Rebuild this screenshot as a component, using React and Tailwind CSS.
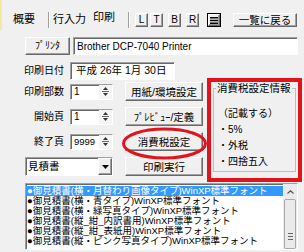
import React from "react";

const FONT = "font-['Liberation_Sans','Noto_Sans_CJK_JP',sans-serif]";

// Windows classic bevels
const raised =
  "bg-[#f0f0f0] border border-t-white border-l-white border-r-[#696969] border-b-[#696969] shadow-[inset_-1px_-1px_0_#a0a0a0]";
const sunken =
  "bg-white border border-t-[#a0a0a0] border-l-[#a0a0a0] border-r-white border-b-white shadow-[inset_1px_1px_0_#696969]";

const Btn = ({ className = "", children }) => (
  <div
    className={`${raised} flex items-center justify-center text-[10.5px] leading-[12px] text-black whitespace-nowrap ${className}`}
  >
    {children}
  </div>
);

const Sep = () => (
  <div className="w-[2px] h-[16px] border-l border-l-[#a0a0a0] border-r border-r-white" />
);

const Spin = () => (
  <div className="w-[13px] h-full flex flex-col items-center justify-center gap-[1px] bg-[#f4f4f4]">
    <svg width="5" height="3" viewBox="0 0 5 3">
      <path d="M2.5 0 L5 3 H0Z" fill="#333" />
    </svg>
    <div className="w-[7px] h-px bg-[#666]" />
    <svg width="5" height="3" viewBox="0 0 5 3">
      <path d="M0 0 H5 L2.5 3Z" fill="#333" />
    </svg>
  </div>
);

const FieldRow = ({ label, value, btn, small }) => (
  <div className="h-[25px] flex items-center">
    <div className="w-[64px] text-right text-[10px] leading-[12px]">{label}</div>
    <div className={`${sunken} ml-[6px] w-[43px] h-[16px] flex`}>
      <div className={`flex-1 pl-[3px] leading-[14px] ${small ? "text-[9.5px]" : "text-[10px]"}`}>
        {value}
      </div>
      <Spin />
    </div>
    <Btn className="ml-[12px] w-[78px] h-[19px]">{btn}</Btn>
  </div>
);

const rows = [
  "●御見積書(横・月替わり画像タイプ)WinXP標準フォント",
  "●御見積書(横・青タイプ)WinXP標準フォント",
  "●御見積書(横・緑写真タイプ)WinXP標準フォント",
  "●御見積書(縦_紺_内訳書用)WinXP標準フォント",
  "●御見積書(縦_紺_表紙用)WinXP標準フォント",
  "●御見積書(縦・ピンク写真タイプ)WinXP標準フォント",
];

export default function App() {
  return (
    <div
      className={`relative w-[304px] h-[252px] overflow-hidden bg-[#f0f0f0] text-black flex flex-col ${FONT}`}
    >
      {/* tabs + toolbar */}
      <div className="h-[30px] flex shrink-0">
        <div className="w-[2px] bg-[#f1eba2]" />
        <div className="flex items-start pt-[12px] pl-[10px] text-[11px] leading-[12px]">
          <div className="w-[36px] pl-[1px] pt-[1px]">概要</div>
          <Sep />
          <div className="w-[40px] pl-[3px] pt-[1px]">行入力</div>
          <div className="w-[38px] pl-[3px] -mt-[1px]">印刷</div>
          <Sep />
          <Btn className="ml-[5px] mt-[1px] w-[13px] h-[14px] text-[10px]">L</Btn>
          <Btn className="ml-[2px] mt-[1px] w-[13px] h-[14px] text-[10px]">T</Btn>
          <Btn className="ml-[5px] mt-[1px] w-[13px] h-[14px] text-[10px]">B</Btn>
          <Btn className="ml-[5px] mt-[1px] w-[13px] h-[14px] text-[10px]">R</Btn>
          <div className="ml-[8px] mt-[1px] w-[14px] h-[14px] border border-black">
            <div className={`${raised} w-full h-full flex items-center justify-center`}>
              <svg width="8" height="7" viewBox="0 0 8 7">
                <rect x="0" y="0" width="8" height="1.5" fill="#000" />
                <rect x="0" y="2.75" width="8" height="1.5" fill="#000" />
                <rect x="0" y="5.5" width="8" height="1.5" fill="#000" />
              </svg>
            </div>
          </div>
          <Btn className="ml-[12px] mt-[1px] w-[64px] h-[14px]">一覧に戻る</Btn>
        </div>
      </div>

      {/* printer */}
      <div className="mt-[7px] h-[18px] flex pl-[25px] pr-[6px] shrink-0">
        <Btn className="w-[45px] h-full text-[10px]">ﾌﾟﾘﾝﾀ</Btn>
        <div className={`${sunken} ml-[3px] flex-1 flex items-center pl-[3px] text-[10px]`}>
          Brother DCP-7040 Printer
        </div>
      </div>

      {/* settings */}
      <div className="mt-[7px] h-[120px] flex shrink-0">
        <div className="w-[203px] flex flex-col">
          <div className="h-[18px] flex items-center">
            <div className="w-[64px] text-right text-[10px] leading-[12px]">印刷日付</div>
            <div className={`${sunken} ml-[6px] w-[105px] h-full flex items-center pl-[5px] text-[10.5px]`}>
              平成 26年 1月 30日
            </div>
          </div>
          <div className="-mt-[1px] flex flex-col">
            <FieldRow label="印刷部数" value="1" btn="用紙/環境設定" />
            <FieldRow label="開始頁" value="1" btn="ﾌﾟﾚﾋﾞｭｰ/定義" />
            <FieldRow label="終了頁" value="9999" btn="消費税設定" small />
            <div className="h-[25px] flex items-center">
              <div className={`${sunken} ml-[25px] w-[88px] h-[19px] flex`}>
                <div className="flex-1 pl-[2px] text-[10.5px] leading-[16px]">見積書</div>
                <div className={`${raised} w-[14px] flex items-center justify-center`}>
                  <svg width="7" height="4" viewBox="0 0 7 4">
                    <path d="M0 0 H7 L3.5 4Z" fill="#000" />
                  </svg>
                </div>
              </div>
              <Btn className="ml-[12px] w-[78px] h-[19px]">印刷実行</Btn>
            </div>
          </div>
        </div>

        {/* tax info, boxed in red */}
        <div className="ml-[4px] mt-[16px] w-[95px] h-[104px] border-4 border-[#e2141b] px-[2px]">
          <fieldset className="border border-[#bdbdbd] h-[90px] min-w-0">
            <legend className="ml-[2px] px-[1px] text-[10.5px] leading-[12px] whitespace-nowrap">
              消費税設定情報
            </legend>
            <div className="mt-[12px] pl-[4px] text-[10px] leading-[16px] whitespace-nowrap">
              <div>（記載する）</div>
              <div>・5%</div>
              <div>・外税</div>
              <div>・四捨五入</div>
            </div>
          </fieldset>
        </div>
      </div>

      {/* form list */}
      <div className={`${sunken} mt-[1px] ml-[25px] w-[273px] flex-1 mb-[2px] flex overflow-hidden`}>
        <div className="flex-1 pt-[2px] pl-[1px] text-[9.5px] leading-[10px] whitespace-nowrap overflow-hidden">
          {rows.map((r, i) => (
            <div key={i} className={i === 0 ? "bg-[#3399ff] text-white -ml-[1px] pl-[1px]" : ""}>
              {r}
            </div>
          ))}
        </div>
        <div className="w-[14px] flex flex-col bg-[#ebebeb]">
          <div className="h-[15px] flex items-center justify-center">
            <svg width="7" height="4" viewBox="0 0 7 4">
              <path d="M0.5 3.5 L3.5 0.8 L6.5 3.5" stroke="#555" strokeWidth="1.2" fill="none" />
            </svg>
          </div>
          <div className="mx-[1px] flex-1 border border-[#a8a8a8] rounded-[2px] bg-[#eaeaea] flex flex-col items-center pt-[33px] gap-[2px]">
            <div className="w-[5px] h-px bg-[#666]" />
            <div className="w-[5px] h-px bg-[#666]" />
            <div className="w-[5px] h-px bg-[#666]" />
          </div>
        </div>
      </div>

      {/* red hand-drawn circle around 消費税設定 */}
      <svg className="absolute left-[120px] top-[126px]" width="90" height="35" viewBox="0 0 90 35">
        <ellipse cx="44.5" cy="17.5" rx="41" ry="14.5" stroke="#e2141b" strokeWidth="3" fill="none" />
      </svg>
    </div>
  );
}
